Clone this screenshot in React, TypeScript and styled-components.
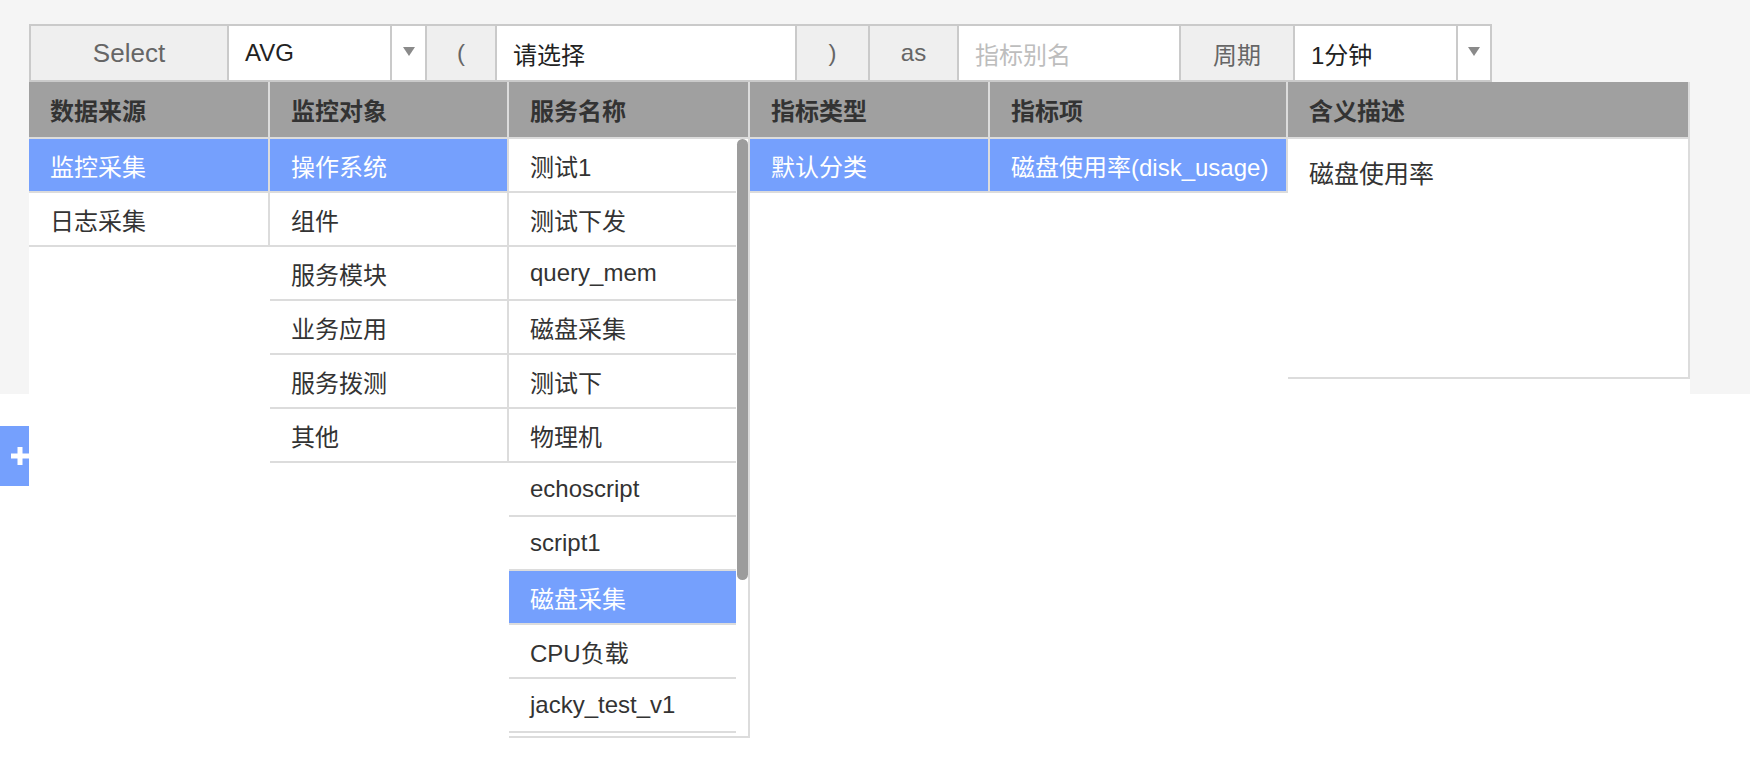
import React from "react";
import styled, { createGlobalStyle } from "styled-components";

const GlobalStyle = createGlobalStyle`
  html, body { margin: 0; padding: 0; background: #fff; min-height: 758px; }
  #root { min-height: 758px; }
  body {
    font-family: "Liberation Sans", "Noto Sans CJK SC", sans-serif;
    color: #333;
  }
  * { box-sizing: border-box; }
`;

const Page = styled.div`
  min-height: 758px;
  background: #fff;
`;

const Top = styled.section`
  background: #f5f5f5;
  height: 394px;
  padding: 24px 0 0 29px;
`;

const Toolbar = styled.div`
  display: flex;
  width: max-content;
  height: 58px;
  border: 2px solid #cacaca;
  border-right: none;
`;

const Cell = styled.div<{ $w: number; $kind: "label" | "value" | "arrow" }>`
  flex: none;
  width: ${(p) => p.$w}px;
  height: 100%;
  border-right: 2px solid #cacaca;
  display: flex;
  align-items: center;
  justify-content: ${(p) => (p.$kind === "value" ? "flex-start" : "center")};
  padding-left: ${(p) => (p.$kind === "value" ? "16px" : "0")};
  background: ${(p) => (p.$kind === "label" ? "#efefef" : "#fff")};
  color: ${(p) => (p.$kind === "label" ? "#666" : "#222")};
  font-size: 24px;
  white-space: nowrap;
`;

const Placeholder = styled.span`
  color: #bdbdbd;
`;

const Big = styled.span`
  font-size: 26px;
`;

const Caret = styled.span`
  width: 0;
  height: 0;
  border-left: 6px solid transparent;
  border-right: 6px solid transparent;
  border-top: 9px solid #8a8a8a;
  margin-bottom: 4px;
`;

const Panel = styled.div`
  position: relative;
  z-index: 1;
  display: flex;
  align-items: flex-start;
  width: 1661px;
  height: 312px;
  background: #fff;
`;

const Column = styled.div<{ $w: number }>`
  flex: none;
  width: ${(p) => p.$w}px;
  border-right: 2px solid #dcdcdc;
  background: #fff;
`;

const HeadCell = styled.div`
  height: 57px;
  border-bottom: 2px solid #dcdcdc;
  background: #a0a0a0;
  color: #333;
  font-weight: 700;
  font-size: 24px;
  padding-left: 21px;
  display: flex;
  align-items: center;
`;

const Item = styled.div<{ $active?: boolean }>`
  flex: none;
  height: 54px;
  border-bottom: 2px solid #dcdcdc;
  padding-left: 21px;
  display: flex;
  align-items: center;
  font-size: 24px;
  white-space: nowrap;
  background: ${(p) => (p.$active ? "#75a0fd" : "#fff")};
  color: ${(p) => (p.$active ? "#fff" : "#333")};
`;

const ScrollArea = styled.div`
  display: flex;
  height: 599px;
  border-bottom: 2px solid #dcdcdc;
`;

const ScrollList = styled.div`
  flex: 1;
  min-width: 0;
  display: flex;
  flex-direction: column;
  overflow: hidden;
`;

const Track = styled.div`
  flex: none;
  width: 12px;
  padding-left: 1px;
  background: #fff;
`;

const Thumb = styled.div`
  width: 11px;
  height: 441px;
  border-radius: 6px;
  background: #9c9c9c;
`;

const Description = styled.div`
  height: 240px;
  border-bottom: 2px solid #dcdcdc;
  padding: 20px 21px;
  font-size: 25px;
  line-height: 30px;
  color: #333;
`;

const Bottom = styled.section`
  padding-top: 32px;
  height: 364px;
`;

const AddButton = styled.button`
  display: flex;
  align-items: center;
  justify-content: flex-start;
  width: 29px;
  height: 60px;
  padding: 0 0 0 11px;
  border: none;
  background: #75a0fd;
  cursor: pointer;
`;

const sources = [
  { name: "监控采集", active: true },
  { name: "日志采集" },
];
const objects = [
  { name: "操作系统", active: true },
  { name: "组件" },
  { name: "服务模块" },
  { name: "业务应用" },
  { name: "服务拨测" },
  { name: "其他" },
];
const services = [
  { name: "测试1" },
  { name: "测试下发" },
  { name: "query_mem" },
  { name: "磁盘采集" },
  { name: "测试下" },
  { name: "物理机" },
  { name: "echoscript" },
  { name: "script1" },
  { name: "磁盘采集", active: true },
  { name: "CPU负载" },
  { name: "jacky_test_v1" },
  { name: "" },
];

export default function App() {
  return (
    <Page>
      <GlobalStyle />
      <Top>
        <Toolbar>
          <Cell $w={198} $kind="label">
            <Big>Select</Big>
          </Cell>
          <Cell $w={163} $kind="value">AVG</Cell>
          <Cell $w={35} $kind="arrow">
            <Caret />
          </Cell>
          <Cell $w={70} $kind="label">(</Cell>
          <Cell $w={300} $kind="value">请选择</Cell>
          <Cell $w={73} $kind="label">)</Cell>
          <Cell $w={89} $kind="label">as</Cell>
          <Cell $w={222} $kind="value">
            <Placeholder>指标别名</Placeholder>
          </Cell>
          <Cell $w={114} $kind="label">周期</Cell>
          <Cell $w={163} $kind="value">1分钟</Cell>
          <Cell $w={34} $kind="arrow">
            <Caret />
          </Cell>
        </Toolbar>
        <Panel>
          <Column $w={241}>
            <HeadCell>数据来源</HeadCell>
            {sources.map((s, i) => (
              <Item key={i} $active={s.active}>
                {s.name}
              </Item>
            ))}
          </Column>
          <Column $w={239}>
            <HeadCell>监控对象</HeadCell>
            {objects.map((s, i) => (
              <Item key={i} $active={s.active}>
                {s.name}
              </Item>
            ))}
          </Column>
          <Column $w={241}>
            <HeadCell>服务名称</HeadCell>
            <ScrollArea>
              <ScrollList>
                {services.map((s, i) => (
                  <Item key={i} $active={s.active}>
                    {s.name}
                  </Item>
                ))}
              </ScrollList>
              <Track>
                <Thumb />
              </Track>
            </ScrollArea>
          </Column>
          <Column $w={240}>
            <HeadCell>指标类型</HeadCell>
            <Item $active>默认分类</Item>
          </Column>
          <Column $w={298}>
            <HeadCell>指标项</HeadCell>
            <Item $active>磁盘使用率(disk_usage)</Item>
          </Column>
          <Column $w={402}>
            <HeadCell>含义描述</HeadCell>
            <Description>磁盘使用率</Description>
          </Column>
        </Panel>
      </Top>
      <Bottom>
        <AddButton aria-label="add">
          <svg width="18" height="18" viewBox="0 0 18 18">
            <rect x="6.5" y="0" width="5" height="18" fill="#fff" />
            <rect x="0" y="6.5" width="18" height="5" fill="#fff" />
          </svg>
        </AddButton>
      </Bottom>
    </Page>
  );
}
